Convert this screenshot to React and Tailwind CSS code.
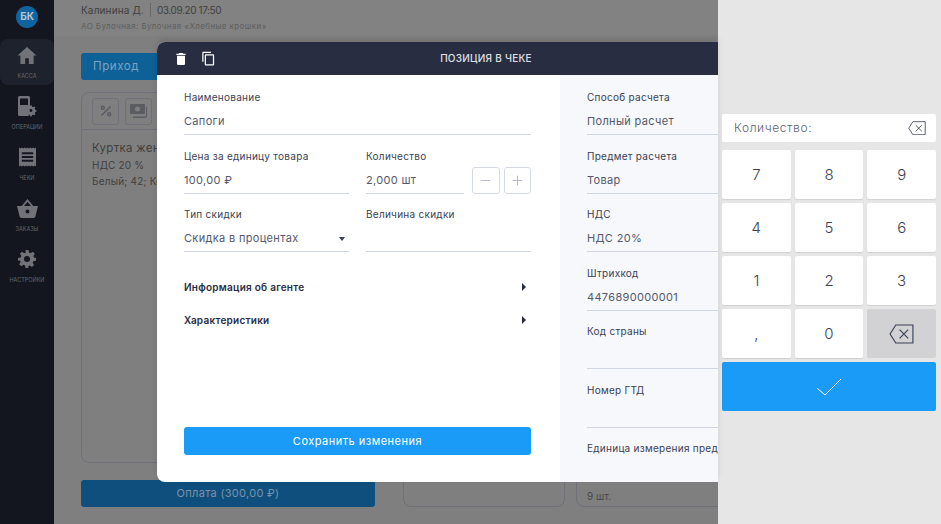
import { Minus, Plus, Percent } from 'lucide-react';

const FONT = "font-['Inter','Noto_Sans',sans-serif]";

function HomeIcon() {
  return (
    <svg width="20" height="17" viewBox="0 0 20 18" fill="currentColor" aria-hidden="true">
      <path d="M10 0 20 9h-3v9h-5v-6H8v6H3V9H0z" />
    </svg>
  );
}

function OperationsIcon() {
  return (
    <svg width="19" height="21" viewBox="0 0 19 21" fill="currentColor" aria-hidden="true">
      <path fillRule="evenodd" d="M1.500 0h9A1.500 1.500 0 0 1 12 1.500V11a5 5 0 0 0-1 8.500A1.500 1.500 0 0 1 10.500 20h-9A1.500 1.500 0 0 1 0 18.500v-17A1.500 1.500 0 0 1 1.500 0zM2 2.500V9h8V2.500z" />
      <path fillRule="evenodd" d="M14 10.500h2l.3 1.300 1 .4 1.200-.7 1.100 1.100-.7 1.200.4 1 1.300.3v1.800l-1.300.3-.4 1 .7 1.200-1.100 1.100-1.200-.7-1 .4-.3 1.300h-2l-.3-1.300-1-.4-1.200.7-1.100-1.100.7-1.200-.4-1-1.300-.3v-1.800l1.300-.3.4-1-.7-1.200 1.100-1.100 1.200.7 1-.4zM15 14a1.500 1.500 0 1 0 0 3 1.500 1.500 0 0 0 0-3z" transform="translate(-1.600 -.6) scale(.97)" />
    </svg>
  );
}

function ReceiptIcon() {
  return (
    <svg width="17" height="20" viewBox="0 0 18 20" fill="currentColor" aria-hidden="true">
      <path fillRule="evenodd" d="M0 0l1.500 1L3 0l1.500 1L6 0l1.500 1L9 0l1.500 1L12 0l1.500 1L15 0l1.500 1L18 0v20l-1.500-1-1.500 1-1.500-1-1.500 1-1.500-1L9 20l-1.500-1L6 20l-1.500-1L3 20l-1.500-1L0 20zM3 5v2h12V5zm0 4v2h12V9zm0 4v2h12v-2z" />
    </svg>
  );
}

function BasketIcon() {
  return (
    <svg width="21" height="19" viewBox="0 0 21 19" fill="currentColor" aria-hidden="true">
      <path fillRule="evenodd" d="M10.500 0 16.300 7H21l-2.600 10.500A2 2 0 0 1 16.500 19h-12a2 2 0 0 1-1.900-1.500L0 7h4.700zM7 7h7l-3.500-4.200zm3.500 3.500a2 2 0 1 0 0 4 2 2 0 0 0 0-4z" />
    </svg>
  );
}

function GearIcon() {
  return (
    <svg width="18" height="18" viewBox="0 0 24 24" fill="currentColor" aria-hidden="true">
      <path fillRule="evenodd" d="M10 0h4l.6 3.300 2.200.9L19.600 2.300l2.800 2.800-1.900 2.800.9 2.200L24 10.700v3.600l-3.600.6-.9 2.200 1.900 2.800-2.800 2.800-2.800-1.900-2.200.9L14 24h-4l-.6-3.300-2.200-.9-2.800 1.900-2.800-2.800 1.900-2.800-.9-2.200L0 14.300v-3.600l3.600-.6.900-2.200-1.900-2.800 2.800-2.800 2.800 1.900 2.200-.9zM12 8a4 4 0 1 0 0 8 4 4 0 0 0 0-8z" />
    </svg>
  );
}

function BackspaceIcon({ size }) {
  return (
    <svg width={size} height={size * 0.8} viewBox="0 0 26 21" fill="none" stroke="#3a3f55" strokeWidth="1.200" aria-hidden="true">
      <path d="M7 1h18v19H7L1 10.500z" />
      <path d="m11 6 9 9M20 6l-9 9" />
    </svg>
  );
}

function TrashIcon() {
  return (
    <svg width="16" height="16" viewBox="0 0 24 24" fill="currentColor" aria-hidden="true">
      <path d="M6 19c0 1.100.9 2 2 2h8c1.100 0 2-.9 2-2V7H6zM19 4h-3.500l-1-1h-5l-1 1H5v2h14z" />
    </svg>
  );
}

function CopyIcon() {
  return (
    <svg width="15" height="15" viewBox="0 0 24 24" fill="currentColor" aria-hidden="true">
      <path d="M16 1H4c-1.100 0-2 .9-2 2v14h2V3h12zm3 4H8c-1.100 0-2 .9-2 2v14c0 1.100.9 2 2 2h11c1.100 0 2-.9 2-2V7c0-1.100-.9-2-2-2zm0 16H8V7h11z" />
    </svg>
  );
}

function CashIcon() {
  return (
    <svg width="17" height="14" viewBox="0 0 17 14" fill="#5a5c62" aria-hidden="true">
      <path fillRule="evenodd" d="M1 0h13a1 1 0 0 1 1 1v8a1 1 0 0 1-1 1H1a1 1 0 0 1-1-1V1a1 1 0 0 1 1-1zm6.500 2.500a2.500 2.500 0 1 0 0 5 2.500 2.500 0 0 0 0-5z" />
      <path d="M16 3h1v9a2 2 0 0 1-2 2H3v-1.500h12a1 1 0 0 0 1-1z" />
    </svg>
  );
}

const NAV_ITEMS = [
  { label: 'КАССА', icon: HomeIcon, active: true },
  { label: 'ОПЕРАЦИИ', icon: OperationsIcon },
  { label: 'ЧЕКИ', icon: ReceiptIcon },
  { label: 'ЗАКАЗЫ', icon: BasketIcon },
  { label: 'НАСТРОЙКИ', icon: GearIcon },
];

function Sidebar() {
  return (
    <aside className="flex h-full w-[54px] shrink-0 flex-col bg-[#13161f] text-[#717379]">
      <div className="flex h-[33px] mb-[6px] shrink-0 items-center justify-center">
        <div className="flex h-[22px] w-[22px] items-center justify-center rounded-full bg-[#0f649f] text-[10px] font-bold text-[#b9c4cf]">
          БК
        </div>
      </div>
      {NAV_ITEMS.map((item) => {
        const Icon = item.icon;
        return (
          <div
            key={item.label}
            className={`flex h-[46px] mb-[5px] shrink-0 flex-col items-center justify-start rounded-lg pt-[5px] ${item.active ? 'bg-[#1e222d]' : ''}`}
          >
            <div className="flex h-[22px] items-center justify-center">
              <Icon />
            </div>
            <span className="mt-[6px] text-[5.500px] leading-[8px] text-[#63666d]">{item.label}</span>
          </div>
        );
      })}
    </aside>
  );
}

function Background() {
  return (
    <main className="flex min-w-0 flex-1 flex-col overflow-hidden bg-[#828282] text-[#3f3f40]">
      <header className="h-[36px] shrink-0 pl-[27px] pt-[3px]">
        <div className="flex items-center text-[10px] leading-[14px]">
          <span className="tracking-[0.15px]">Калинина Д.</span>
          <span className="mx-[6px] h-[14px] w-px bg-[#666]" />
          <span className="tracking-[-0.4px]">03.09.20 17:50</span>
        </div>
        <p className="mt-[3px] text-[8px] leading-[12px] tracking-[0.4px] whitespace-nowrap text-[#5f5f5f]">
          АО Булочная: Булочная «Хлебные крошки»
        </p>
      </header>
      <div className="flex flex-1 gap-[28px] bg-[#7f7f7f] pl-[27px] pt-[17px] pb-[20px]">
        <div className="flex h-full w-[294px] shrink-0 flex-col">
          <div className="flex h-[27px] shrink-0 items-center rounded-[3px] bg-[#0d6197] pl-[12px] text-[11.500px] tracking-[0.6px] text-[#7fa3c0]">
            Приход
            <span className="ml-[18px] h-0 w-0 border-x-[4px] border-t-[4px] border-x-transparent border-t-[#7fa3c0]" />
          </div>
          <div className="mt-[12px] flex h-[371px] shrink-0 flex-col rounded-lg border border-[#6f7078]">
            <div className="flex h-[37px] shrink-0 items-center gap-[6px] border-b border-[#6f7078] pl-[10px]">
              <div className="flex h-[27px] w-[27px] items-center justify-center rounded-[3px] border border-[#6f7078] text-[#5a5c62]">
                <Percent size={14} strokeWidth={2.500} aria-hidden="true" />
              </div>
              <div className="flex h-[27px] w-[27px] items-center justify-center rounded-[3px] border border-[#6f7078]">
                <CashIcon />
              </div>
            </div>
            <div className="pt-[10px] pl-[10px] whitespace-nowrap">
              <p className="text-[11.500px] leading-4 tracking-[0.3px]">Куртка женская</p>
              <p className="mt-px text-[10px] leading-4 tracking-[0.2px]">НДС 20 %</p>
              <p className="text-[10px] leading-4 tracking-[0.2px]">Белый; 42; Кожа</p>
            </div>
          </div>
          <div className="mt-[17px] flex h-[27px] shrink-0 items-center justify-center rounded-[3px] bg-[#0f4f7e] text-[11px] tracking-[0.3px] text-[#7a93a8]">
            Оплата (300,00 ₽)
          </div>
        </div>
        <div className="flex h-full items-end gap-[11px]">
          <div className="h-[100px] w-[162px] shrink-0 rounded-lg border border-[#6f7078]" />
          <div className="flex h-[100px] w-[162px] shrink-0 flex-col justify-end rounded-lg border border-[#6f7078] pb-[3px] pl-[10px] text-[10px] leading-[14px] text-[#45454a]">
            9 шт.
          </div>
        </div>
      </div>
    </main>
  );
}

function Field({ label, value, className = '', children }) {
  return (
    <div className={`h-[46px] ${className}`}>
      <div className="h-4 text-[10px] leading-4 tracking-[0.27px] whitespace-nowrap text-[#3a3f55]">{label}</div>
      <div className="flex h-[30px] items-center justify-between border-b border-[#cfd5e1] pt-[4px] text-[11px] tracking-[0.33px] whitespace-nowrap text-[#55586a]">
        <span>{value}</span>
        {children}
      </div>
    </div>
  );
}

function Modal() {
  const rightFields = [
    ['Способ расчета', 'Полный расчет'],
    ['Предмет расчета', 'Товар'],
    ['НДС', 'НДС 20%'],
    ['Штрихкод', '4476890000001'],
    ['Код страны', ''],
    ['Номер ГТД', ''],
  ];
  return (
    <div className="absolute top-[42px] left-[157px] flex h-[440px] w-[561px] flex-col overflow-hidden rounded-l-lg bg-white shadow-[0_-3px_6px_rgba(0,0,0,0.1)]">
      <div className="relative flex h-[33px] shrink-0 items-center justify-center bg-[#292d42] text-[10px] font-medium tracking-[0.25px] text-[#dfe0e4]">
        <div className="absolute inset-y-0 left-[16px] flex items-center gap-[12px] text-white">
          <TrashIcon />
          <CopyIcon />
        </div>
        <span className="ml-[97px]">ПОЗИЦИЯ В ЧЕКЕ</span>
      </div>
      <div className="flex min-h-0 flex-1">
        <div className="flex w-[403px] shrink-0 flex-col pt-[14px] pr-[29px] pb-[27px] pl-[27px]">
          <Field label="Наименование" value="Сапоги" />
          <div className="mt-[12.500px] flex gap-[17px]">
            <Field label="Цена за единицу товара" value="100,00 ₽" className="w-[165px] shrink-0" />
            <Field label="Количество" value="2,000 шт" className="w-[98px] shrink-0" />
            <div className="ml-[-9px] flex flex-1 items-end justify-end gap-[4px]">
              <button type="button" className="flex h-[27px] w-[27.500px] items-center justify-center rounded-[3px] border border-[#d5dae5] text-[#a4aab8]">
                <Minus size={15} strokeWidth={1.300} aria-hidden="true" />
              </button>
              <button type="button" className="flex h-[27px] w-[27.500px] items-center justify-center rounded-[3px] border border-[#d5dae5] text-[#a4aab8]">
                <Plus size={15} strokeWidth={1.300} aria-hidden="true" />
              </button>
            </div>
          </div>
          <div className="mt-[12.500px] flex gap-[17px]">
            <Field label="Тип скидки" value="Скидка в процентах" className="w-[165px] shrink-0">
              <span className="mr-[4px] h-0 w-0 border-x-[3.500px] border-t-[4px] border-x-transparent border-t-[#3a3f55]" />
            </Field>
            <Field label="Величина скидки" value="" className="flex-1" />
          </div>
          <div className="mt-[27px] flex h-[16px] items-center justify-between pr-[5px] text-[10px] font-semibold tracking-[0.25px] text-[#292d42]">
            <span>Информация об агенте</span>
            <span className="h-0 w-0 border-y-[4px] border-l-[4px] border-y-transparent border-l-[#292d42]" />
          </div>
          <div className="mt-[17px] flex h-[16px] items-center justify-between pr-[5px] text-[10px] font-semibold tracking-[0.25px] text-[#292d42]">
            <span>Характеристики</span>
            <span className="h-0 w-0 border-y-[4px] border-l-[4px] border-y-transparent border-l-[#292d42]" />
          </div>
          <button type="button" className="mt-auto h-[28px] w-full rounded-[3px] bg-[#1a9bf8] text-[11px] tracking-[0.5px] text-white">
            Сохранить изменения
          </button>
        </div>
        <div className="flex min-w-0 flex-1 flex-col gap-[12.500px] overflow-hidden bg-[#f7f8fb] pt-[14px] pl-[27px]">
          {rightFields.map(([label, value]) => (
            <Field key={label} label={label} value={value} className="w-[200px] shrink-0" />
          ))}
          <div className="h-4 text-[10px] leading-4 tracking-[0.27px] whitespace-nowrap text-[#3a3f55]">Единица измерения предмета расчета</div>
        </div>
      </div>
    </div>
  );
}

const KEYS = ['7', '8', '9', '4', '5', '6', '1', '2', '3', ',', '0'];

function Keypad() {
  return (
    <aside className="flex h-full w-[223px] shrink-0 flex-col bg-[#e6e6e6] pt-[114px] pr-[5px] pl-[4px]">
      <div className="flex h-[28px] shrink-0 items-center justify-between rounded-[2px] bg-white pr-[10px] pl-[12px] text-[12px] font-light tracking-[0.6px] text-[#5f6272]">
        <span>Количество:</span>
        <BackspaceIcon size={18} />
      </div>
      <div className="mt-[8px] grid grid-cols-3 gap-[4px]">
        {KEYS.map((key) => (
          <div key={key} className="flex h-[49px] items-center justify-center rounded-[2px] bg-white pt-[1px] text-[15px] font-light text-[#3a3f55] shadow-[0_1px_1px_#d0d0d0]">
            {key}
          </div>
        ))}
        <div className="flex h-[49px] items-center justify-center rounded-[2px] bg-[#d2d2d4]">
          <BackspaceIcon size={25} />
        </div>
      </div>
      <div className="mt-[4px] flex h-[49px] shrink-0 items-center justify-center rounded-[2px] bg-[#1a9bf8]">
        <svg width="26" height="18" viewBox="0 0 26 18" fill="none" stroke="white" strokeWidth="1" aria-hidden="true">
          <path d="m1 10 8 7L25 1" />
        </svg>
      </div>
    </aside>
  );
}

export default function App() {
  return (
    <div className={`relative flex h-[524px] w-[941px] overflow-hidden ${FONT}`}>
      <Sidebar />
      <Background />
      <Modal />
      <Keypad />
    </div>
  );
}
